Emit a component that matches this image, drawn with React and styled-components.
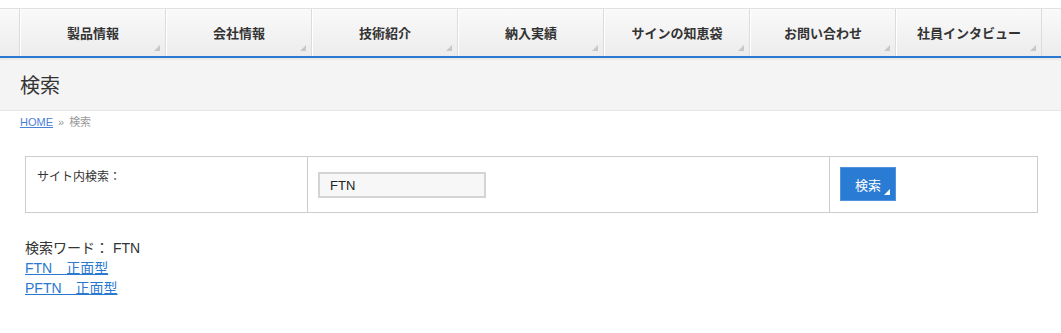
import styled, { createGlobalStyle } from 'styled-components';

const GlobalStyle = createGlobalStyle`
    body {
        margin: 0;
        background: #fff;
        font-family: 'Liberation Sans', 'Noto Sans CJK JP', sans-serif;
        color: #333;
    }
`

const menu = ['製品情報', '会社情報', '技術紹介', '納入実績', 'サインの知恵袋', 'お問い合わせ', '社員インタビュー'];

const results = ['FTN　正面型', 'PFTN　正面型'];

const App = () => {
    return (
        <>
            <GlobalStyle />
            <Header>
                <NavBar>
                    <NavList>
                        {menu.map((item) => (
                            <NavItem key={item}>
                                {item}
                                <Corner />
                            </NavItem>
                        ))}
                    </NavList>
                </NavBar>
                <TitleBand>
                    <PageTitle>検索</PageTitle>
                </TitleBand>
            </Header>
            <Crumbs>
                <CrumbLink href="#">HOME</CrumbLink>
                <CrumbSep>»</CrumbSep>
                <span>検索</span>
            </Crumbs>
            <Main>
                <SearchTable>
                    <LabelCell>サイト内検索：</LabelCell>
                    <InputCell>
                        <SearchInput defaultValue="FTN" />
                    </InputCell>
                    <ButtonCell>
                        <SearchButton>
                            検索
                            <Corner $light />
                        </SearchButton>
                    </ButtonCell>
                </SearchTable>
                <Results>
                    <Keyword>検索ワード： FTN</Keyword>
                    {results.map((r) => (
                        <ResultLink key={r} href="#">{r}</ResultLink>
                    ))}
                </Results>
            </Main>
        </>
    )
}

const Header = styled.header`
        padding-top: 8px;
`

const NavBar = styled.nav`
        border-top: 1px solid #e2e2e2;
        background: linear-gradient(#fafafa, #ececec);
        border-bottom: 2px solid #2a78cf;
        height: 47px;
`

const NavList = styled.ul`
        display: flex;
        margin: 0;
        padding: 0 0 0 20px;
        list-style: none;
        height: 100%;
`

const NavItem = styled.li`
        position: relative;
        width: 144px;
        display: flex;
        align-items: center;
        justify-content: center;
        border-left: 1px solid #fff;
        border-right: 1px solid #dcdcdc;
        font-size: 13px;
        font-weight: bold;
        color: #333;
        &:first-child {
            box-shadow: -1px 0 0 #dcdcdc;
        }
`

const Corner = styled.span`
        position: absolute;
        right: 5px;
        bottom: 5px;
        width: 0;
        height: 0;
        border-style: solid;
        border-width: 0 0 6px 6px;
        border-color: transparent transparent ${(p) => (p.$light ? '#fff' : '#c8c8c8')} transparent;
`

const TitleBand = styled.div`
        background: #f4f4f4;
        height: 52px;
        display: flex;
        align-items: center;
        padding-left: 20px;
        box-shadow: inset 0 3px 3px -2px rgba(0, 0, 0, 0.08);
        border-bottom: 1px solid #e6e6e6;
`

const PageTitle = styled.h1`
        margin: 0;
        font-size: 20px;
        font-weight: normal;
        color: #333;
`

const Crumbs = styled.div`
        padding: 3px 20px 0;
        font-size: 11px;
        color: #999;
        line-height: 16px;
`

const CrumbLink = styled.a`
        color: #4a80d8;
        text-decoration: underline;
`

const CrumbSep = styled.span`
        margin: 0 5px;
`

const Main = styled.main`
        padding: 26px 23px 0 25px;
`

const SearchTable = styled.div`
        display: grid;
        grid-template-columns: 282px 522px 1fr;
        border: 1px solid #ccc;
        height: 57px;
        box-sizing: border-box;
`

const LabelCell = styled.div`
        padding: 10px 11px;
        font-size: 12px;
        color: #333;
        border-right: 1px solid #ccc;
`

const InputCell = styled.div`
        padding: 15px 10px;
        border-right: 1px solid #ccc;
`

const SearchInput = styled.input`
        width: 168px;
        height: 26px;
        box-sizing: border-box;
        border: 2px solid #d4d4d4;
        background: #f7f7f7;
        padding: 0 10px;
        font-family: 'Liberation Sans', 'Noto Sans CJK JP', sans-serif;
        font-size: 13px;
        color: #222;
        outline: none;
`

const ButtonCell = styled.div`
        padding: 10px 10px;
`

const SearchButton = styled.button`
        position: relative;
        width: 56px;
        height: 34px;
        background: #2a7bd3;
        border: 1px solid #4f92dd;
        color: #fff;
        font-family: 'Liberation Sans', 'Noto Sans CJK JP', sans-serif;
        font-size: 13px;
        padding: 0;
        cursor: pointer;
`

const Results = styled.div`
        display: flex;
        flex-direction: column;
        align-items: flex-start;
        margin-top: 25px;
        font-size: 14px;
        line-height: 20px;
`

const Keyword = styled.div`
        color: #333;
`

const ResultLink = styled.a`
        color: #2a78cf;
        text-decoration: underline;
`

export default App;
